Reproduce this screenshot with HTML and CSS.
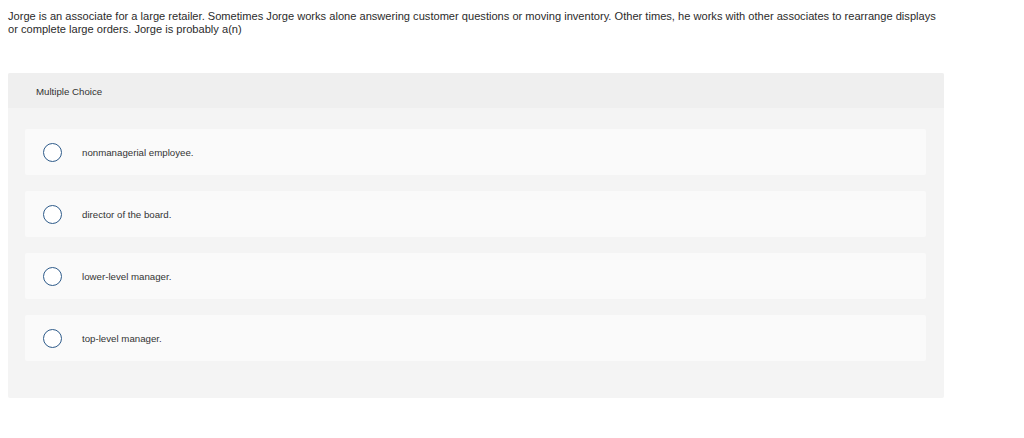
FILE: index.html
```html
<!DOCTYPE html>
<html>
<head>
<meta charset="utf-8">
<link rel="stylesheet" href="styles.css">
</head>
<body>
<div class="page">
  <p class="question">Jorge is an associate for a large retailer. Sometimes Jorge works alone answering customer questions or moving inventory. Other times, he works with other associates to rearrange displays or complete large orders. Jorge is probably a(n)</p>
  <section class="panel">
    <header class="panel-head">Multiple Choice</header>
    <div class="panel-body">
      <div class="option"><span class="radio"></span><span class="label">nonmanagerial employee.</span></div>
      <div class="option"><span class="radio"></span><span class="label">director of the board.</span></div>
      <div class="option"><span class="radio"></span><span class="label">lower-level manager.</span></div>
      <div class="option"><span class="radio"></span><span class="label">top-level manager.</span></div>
    </div>
  </section>
</div>
</body>
</html>
```
FILE: styles.css
```css
* { box-sizing: border-box; }
html, body { margin: 0; padding: 0; background: #fff; }
body {
  font-family: "Liberation Sans", Arial, sans-serif;
  color: #2b2b2b;
}
.page {
  padding: 10px 8px 0 8px;
  width: 952px;
}
.question {
  margin: 0;
  font-size: 11.1px;
  line-height: 13px;
  width: 936px;
}
.panel {
  margin-top: 37px;
  width: 936px;
  background: #f4f4f4;
  border-radius: 2px;
  overflow: hidden;
}
.panel-head {
  height: 35px;
  background: #efefef;
  display: flex;
  align-items: center;
  padding-left: 28px;
  padding-top: 1px;
  font-size: 9.7px;
  color: #333;
}
.panel-body {
  padding: 21px 18px 37px 17px;
  display: flex;
  flex-direction: column;
  gap: 16px;
}
.option {
  height: 46px;
  background: #fafafa;
  border-radius: 2px;
  display: flex;
  align-items: center;
  padding-left: 18px;
}
.radio {
  width: 19px;
  height: 19px;
  border: 1px solid #2e5b8a;
  border-radius: 50%;
  background: #fff;
  flex: none;
}
.label {
  margin-left: 20px;
  font-size: 9.7px;
  color: #333;
}
```
